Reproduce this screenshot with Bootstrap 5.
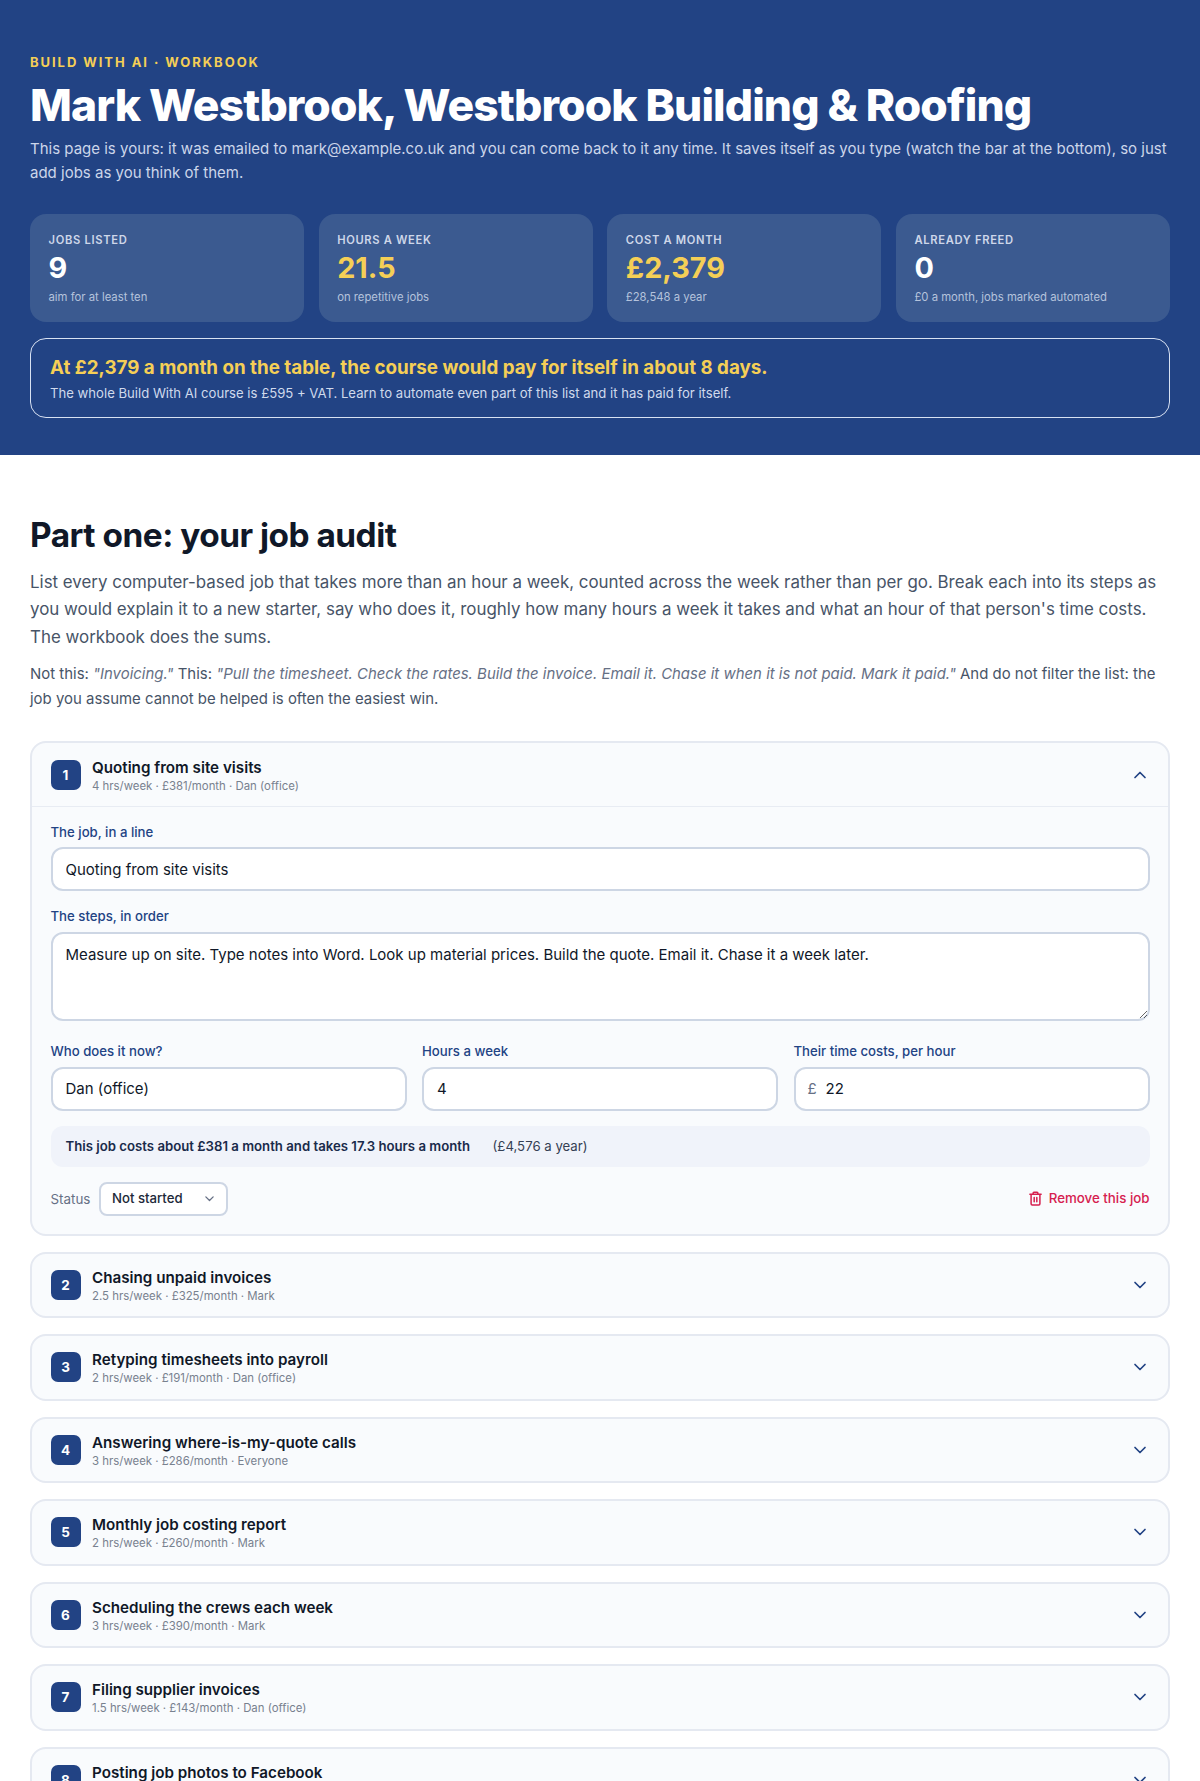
<!DOCTYPE html>
<html lang="en">
<head>
<meta charset="utf-8">
<title>Build With AI Workbook</title>
<link rel="stylesheet" href="https://cdn.jsdelivr.net/npm/bootstrap@5.3.0/dist/css/bootstrap.min.css">
<style>
html,body{background:#fff}
body{font-family:"Inter","Liberation Sans",sans-serif;color:#101828}
.page-clip{height:1781px;overflow:hidden}
.hero{background:#224384;color:#fff;padding:52px 30px 38px;height:455px}
.eyebrow{font-size:13px;font-weight:700;letter-spacing:.15em;color:#f5cf56;line-height:20px;margin:0 0 7px}
.hero-title{font-size:44.4px;font-weight:800;letter-spacing:-.02em;line-height:52px;margin:0 0 6px;color:#fff}
.hero-sub{font-size:15px;line-height:24px;color:#ccd6ea;margin:0 0 29px}
.stat-grid{display:grid;grid-template-columns:repeat(4,1fr);gap:14.6px}
.stat-box{background:#3b5a90;border-radius:16px;padding:18px 18.5px 0;height:108px}
.stat-label{font-size:11.2px;font-weight:600;letter-spacing:.06em;text-transform:uppercase;color:#ced7e9;line-height:17px}
.stat-value{font-size:28.8px;font-weight:700;line-height:38.5px;color:#fff}
.stat-value.gold{color:#f5cf56}
.stat-note{font-size:11.3px;color:#b5c3dc;line-height:18px}
.payback{border:1px solid #d8e1f2;border-radius:16px;margin-top:15.5px;padding:16.5px 19px;height:80px}
.payback-head{font-size:18.75px;font-weight:700;color:#f5cf56;line-height:26px}
.payback-sub{font-size:13.13px;color:#d0daec;line-height:20px;margin-top:2px}
.main-part{padding:0 30px}
.part-title{font-size:33.4px;font-weight:700;letter-spacing:-.015em;line-height:44px;margin:58px 0 12px;color:#101828}
.part-lead{font-size:16.9px;line-height:27.4px;color:#475467;margin:0 0 11px}
.part-note{font-size:14.95px;line-height:25px;color:#475467;margin:0 0 29px}
.part-note em{color:#667085}
.job-item{background:#f9fbfd;border:2px solid #e5e9f1;border-radius:16px;margin-bottom:16px}
.job-head{display:flex;align-items:center;gap:11.5px;padding:0 18.5px;height:62.5px}
.job-open .job-head{border-bottom:1px solid #e8ecf3;height:64px}
.job-num{width:30px;height:30px;flex:none;border-radius:7px;background:#224384;color:#fff;font-size:13.5px;font-weight:700;display:flex;align-items:center;justify-content:center}
.job-text{padding-top:2px}
.job-name{font-size:15.2px;font-weight:600;line-height:20px;color:#101828}
.job-meta{font-size:11.4px;line-height:16px;color:#78818f}
.job-chev{margin-left:auto;margin-right:1.5px;color:#224384;width:16px;height:16px;flex:none}
.job-body{padding:15.5px 18.5px 18px}
.fld-label{display:block;font-size:13.2px;font-weight:500;color:#224384;line-height:18px;margin-bottom:6.5px}
.fld-input{display:block;width:100%;background:#fff;border:2px solid #cdd6e4;border-radius:12px;height:44px;padding:0 13px;font-size:15px;color:#101828;font-family:inherit}
.fld-area{height:89px;padding:10px 13px;line-height:22px;resize:vertical}
.money-wrap{position:relative}
.money-sign{position:absolute;left:14px;top:0;line-height:44px;font-size:15px;color:#667085}
.money-input{padding-left:30px}
.fld-gap{margin-top:16px}
.tri-row{display:grid;grid-template-columns:repeat(3,1fr);gap:15.5px;margin-top:21.5px}
.cost-bar{background:#f0f3fa;border-radius:12px;height:41px;margin-top:15.5px;padding:0 15px;display:flex;align-items:center;gap:22.5px;font-size:13.2px;color:#344054}
.cost-bar strong{font-weight:600;color:#1a2b4b}
.foot-row{display:flex;align-items:center;justify-content:space-between;margin-top:15px}
.status-label{font-size:13.4px;color:#667085;margin-right:8.5px}
.status-pick{appearance:none;-webkit-appearance:none;width:129px;height:33.5px;background:#fff url("data:image/svg+xml,%3Csvg xmlns='http://www.w3.org/2000/svg' viewBox='0 0 16 16'%3E%3Cpath fill='none' stroke='%23667085' stroke-width='1.6' stroke-linecap='round' stroke-linejoin='round' d='M3.5 6l4.5 4.5L12.5 6'/%3E%3C/svg%3E") no-repeat right 10px center/13px 13px;border:2px solid #cdd6e4;border-radius:8px;padding:0 11px;font-size:13.2px;font-weight:500;color:#1d2939;font-family:inherit}
.remove-btn{display:inline-flex;align-items:center;gap:6px;background:none;border:0;padding:0;color:#d6204f;font-size:13.3px;font-weight:500;font-family:inherit}
</style>
</head>
<body>
<div class="page-clip">
<header class="hero">
  <p class="eyebrow">BUILD WITH AI · WORKBOOK</p>
  <h1 class="hero-title">Mark Westbrook, Westbrook Building &amp; Roofing</h1>
  <p class="hero-sub">This page is yours: it was emailed to mark@example.co.uk and you can come back to it any time. It saves itself as you type (watch the bar at the bottom), so just add jobs as you think of them.</p>
  <div class="stat-grid">
    <div class="stat-box"><div class="stat-label">Jobs listed</div><div class="stat-value">9</div><div class="stat-note">aim for at least ten</div></div>
    <div class="stat-box"><div class="stat-label">Hours a week</div><div class="stat-value gold">21.5</div><div class="stat-note">on repetitive jobs</div></div>
    <div class="stat-box"><div class="stat-label">Cost a month</div><div class="stat-value gold">£2,379</div><div class="stat-note">£28,548 a year</div></div>
    <div class="stat-box"><div class="stat-label">Already freed</div><div class="stat-value">0</div><div class="stat-note">£0 a month, jobs marked automated</div></div>
  </div>
  <div class="payback">
    <div class="payback-head">At £2,379 a month on the table, the course would pay for itself in about 8 days.</div>
    <div class="payback-sub">The whole Build With AI course is £595 + VAT. Learn to automate even part of this list and it has paid for itself.</div>
  </div>
</header>
<main class="main-part">
  <h2 class="part-title">Part one: your job audit</h2>
  <p class="part-lead">List every computer-based job that takes more than an hour a week, counted across the week rather than per go. Break each into its steps as you would explain it to a new starter, say who does it, roughly how many hours a week it takes and what an hour of that person's time costs. The workbook does the sums.</p>
  <p class="part-note">Not this: <em>"Invoicing."</em> This: <em>"Pull the timesheet. Check the rates. Build the invoice. Email it. Chase it when it is not paid. Mark it paid."</em> And do not filter the list: the job you assume cannot be helped is often the easiest win.</p>

  <section class="job-item job-open">
    <div class="job-head">
      <span class="job-num">1</span>
      <div class="job-text"><div class="job-name">Quoting from site visits</div><div class="job-meta">4 hrs/week · £381/month · Dan (office)</div></div>
      <svg class="job-chev" viewBox="0 0 16 16" fill="none" stroke="currentColor" stroke-width="1.7" stroke-linecap="round" stroke-linejoin="round"><path d="M3 10.5l5-5 5 5"/></svg>
    </div>
    <div class="job-body">
      <label class="fld-label">The job, in a line</label>
      <input class="fld-input" type="text" value="Quoting from site visits">
      <div class="fld-gap">
        <label class="fld-label">The steps, in order</label>
        <textarea class="fld-input fld-area">Measure up on site. Type notes into Word. Look up material prices. Build the quote. Email it. Chase it a week later.</textarea>
      </div>
      <div class="tri-row">
        <div><label class="fld-label">Who does it now?</label><input class="fld-input" type="text" value="Dan (office)"></div>
        <div><label class="fld-label">Hours a week</label><input class="fld-input" type="text" value="4"></div>
        <div><label class="fld-label">Their time costs, per hour</label><div class="money-wrap"><span class="money-sign">£</span><input class="fld-input money-input" type="text" value="22"></div></div>
      </div>
      <div class="cost-bar"><strong>This job costs about £381 a month and takes 17.3 hours a month</strong><span>(£4,576 a year)</span></div>
      <div class="foot-row">
        <div class="d-flex align-items-center"><span class="status-label">Status</span><select class="status-pick"><option>Not started</option></select></div>
        <button class="remove-btn" type="button"><svg width="15" height="15" viewBox="0 0 16 16" fill="none" stroke="currentColor" stroke-width="1.6" stroke-linecap="round" stroke-linejoin="round"><path d="M2 3.5h12M5.5 3.5V2a.8.8 0 0 1 .8-.8h3.4a.8.8 0 0 1 .8.8v1.5M3.3 3.5v10.2c0 .7.5 1.2 1.2 1.2h7c.7 0 1.2-.5 1.2-1.2V3.5M6.6 7v4.5M9.4 7v4.5"/></svg>Remove this job</button>
      </div>
    </div>
  </section>

  <section class="job-item"><div class="job-head"><span class="job-num">2</span><div class="job-text"><div class="job-name">Chasing unpaid invoices</div><div class="job-meta">2.5 hrs/week · £325/month · Mark</div></div><svg class="job-chev" viewBox="0 0 16 16" fill="none" stroke="currentColor" stroke-width="1.7" stroke-linecap="round" stroke-linejoin="round"><path d="M3 5.5l5 5 5-5"/></svg></div></section>
  <section class="job-item"><div class="job-head"><span class="job-num">3</span><div class="job-text"><div class="job-name">Retyping timesheets into payroll</div><div class="job-meta">2 hrs/week · £191/month · Dan (office)</div></div><svg class="job-chev" viewBox="0 0 16 16" fill="none" stroke="currentColor" stroke-width="1.7" stroke-linecap="round" stroke-linejoin="round"><path d="M3 5.5l5 5 5-5"/></svg></div></section>
  <section class="job-item"><div class="job-head"><span class="job-num">4</span><div class="job-text"><div class="job-name">Answering where-is-my-quote calls</div><div class="job-meta">3 hrs/week · £286/month · Everyone</div></div><svg class="job-chev" viewBox="0 0 16 16" fill="none" stroke="currentColor" stroke-width="1.7" stroke-linecap="round" stroke-linejoin="round"><path d="M3 5.5l5 5 5-5"/></svg></div></section>
  <section class="job-item"><div class="job-head"><span class="job-num">5</span><div class="job-text"><div class="job-name">Monthly job costing report</div><div class="job-meta">2 hrs/week · £260/month · Mark</div></div><svg class="job-chev" viewBox="0 0 16 16" fill="none" stroke="currentColor" stroke-width="1.7" stroke-linecap="round" stroke-linejoin="round"><path d="M3 5.5l5 5 5-5"/></svg></div></section>
  <section class="job-item"><div class="job-head"><span class="job-num">6</span><div class="job-text"><div class="job-name">Scheduling the crews each week</div><div class="job-meta">3 hrs/week · £390/month · Mark</div></div><svg class="job-chev" viewBox="0 0 16 16" fill="none" stroke="currentColor" stroke-width="1.7" stroke-linecap="round" stroke-linejoin="round"><path d="M3 5.5l5 5 5-5"/></svg></div></section>
  <section class="job-item"><div class="job-head"><span class="job-num">7</span><div class="job-text"><div class="job-name">Filing supplier invoices</div><div class="job-meta">1.5 hrs/week · £143/month · Dan (office)</div></div><svg class="job-chev" viewBox="0 0 16 16" fill="none" stroke="currentColor" stroke-width="1.7" stroke-linecap="round" stroke-linejoin="round"><path d="M3 5.5l5 5 5-5"/></svg></div></section>
  <section class="job-item"><div class="job-head"><span class="job-num">8</span><div class="job-text"><div class="job-name">Posting job photos to Facebook</div><div class="job-meta">&nbsp;</div></div><svg class="job-chev" viewBox="0 0 16 16" fill="none" stroke="currentColor" stroke-width="1.7" stroke-linecap="round" stroke-linejoin="round"><path d="M3 5.5l5 5 5-5"/></svg></div></section>
</main>
</div>
<script src="https://cdn.jsdelivr.net/npm/bootstrap@5.3.0/dist/js/bootstrap.bundle.min.js"></script>
</body>
</html>
